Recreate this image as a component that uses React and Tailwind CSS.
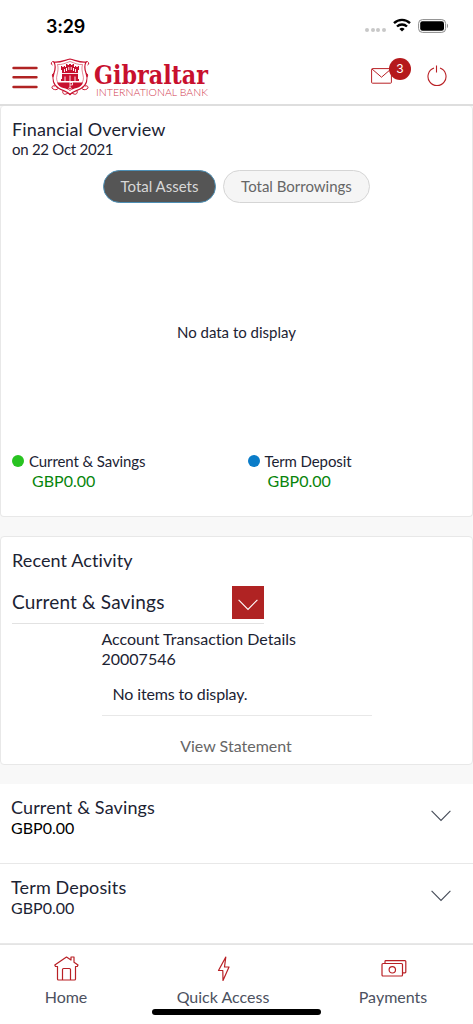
import clsx from 'clsx';

const accounts = [
  { name: 'Current & Savings', balance: 'GBP0.00', tone: 'text-black' },
  { name: 'Term Deposits', balance: 'GBP0.00', tone: 'text-[#1c2333]' },
];

export default function App() {
  return (
    <div className="w-[473px] h-[1024px] overflow-hidden flex flex-col bg-[#f8f8f8] font-['Lato',sans-serif] text-[#1c2333] [font-variant-ligatures:none]">
      <header className="h-[106px] shrink-0 bg-white border-b-2 border-[#dedede]">
        <StatusBar />
        <TopBar />
      </header>
      <FinancialOverview />
      <RecentActivity />
      <div className="mt-[19px] shrink-0 bg-white">
        {accounts.map((a) => (
          <AccountRow key={a.name} {...a} />
        ))}
      </div>
      <BottomNav />
    </div>
  );
}

function StatusBar() {
  return (
    <div className="h-[50px] pl-[46px] pr-[24px] flex items-center justify-between">
      <span className="mt-[3px] font-['Inter',sans-serif] font-semibold text-[18px] leading-6 tracking-[-0.2px] text-black">3:29</span>
      <div className="flex items-center">
        <div className="flex gap-[1.6px] mt-[10px] mr-[7px]">
          {[0, 1, 2, 3].map((i) => (
            <span key={i} className="size-[4px] rounded-full bg-[#c8c8c8]" />
          ))}
        </div>
        <svg width="18" height="14" viewBox="0 0 18 14" className="mr-[7px]" fill="none" stroke="#000" strokeWidth="2.4">
          <path d="M1 5.1a11.6 11.6 0 0 1 16 0" />
          <path d="M4 8.5a7.3 7.3 0 0 1 10 0" />
          <path d="M9 13.6 6.4 11a3.8 3.8 0 0 1 5.2 0z" fill="#000" stroke="none" />
        </svg>
        <svg width="31" height="14" viewBox="0 0 31 14" className="mt-[2px]">
          <rect x="0.6" y="0.6" width="27" height="12.8" rx="3.8" fill="none" stroke="#8a8a8a" strokeWidth="1" />
          <rect x="2.2" y="2.2" width="23.8" height="9.6" rx="2.3" fill="#000" />
          <path d="M29 4.8v4.4c1.3-.5 1.3-3.9 0-4.4z" fill="#888" />
        </svg>
      </div>
    </div>
  );
}

function TopBar() {
  return (
    <div className="h-[54px] pl-[12px] pr-[26px] flex items-center">
      <svg width="26" height="24" viewBox="0 0 26 24" stroke="#b02323" strokeWidth="2.4" strokeLinecap="round">
        <path d="M1.500 3H24.500M1.500 12.200H24.500M1.500 22H24.500" />
      </svg>
      <Crest />
      <svg width="118" height="40" viewBox="0 0 118 40" className="ml-[3px] mt-[2px] overflow-visible">
        <text x="1" y="25.5" textLength="114" lengthAdjust="spacingAndGlyphs" fill="#c8102e" className="font-['DejaVu_Serif_Condensed','DejaVu_Serif',serif] text-[25.5px] font-bold">
          Gibraltar
        </text>
        <text x="3" y="37.5" textLength="112" lengthAdjust="spacingAndGlyphs" fill="#d23a50" className="font-['Lato',sans-serif] text-[10.5px] font-light">
          INTERNATIONAL BANK
        </text>
      </svg>
      <div className="relative ml-auto mr-[35px] w-[21px] h-[16px] -mt-[3px]">
        <svg width="21" height="16" viewBox="0 0 21 16" fill="none" stroke="#b92025" strokeWidth="1">
          <rect x="0.6" y="0.6" width="19.8" height="14.6" rx="0.8" />
          <path d="M1 1l9.5 8.2L20 1" />
        </svg>
        <span className="absolute left-[18px] -top-[10px] size-[22px] rounded-full bg-[#b5191c] text-white text-[12px] leading-[22px] text-center font-['Inter',sans-serif]">
          3
        </span>
      </div>
      <svg width="20" height="22" viewBox="0 0 20 22" className="-mt-[2px]" fill="none" stroke="#b92025" strokeWidth="1.1">
        <path d="M7 3A9 9 0 1 0 13 3M9.500.5v7" />
      </svg>
    </div>
  );
}

function Crest() {
  return (
    <svg width="40" height="39" viewBox="0 0 40 39" className="ml-[12px] mt-px" fill="none" stroke="#c8102e" strokeWidth="1">
      <path d="M4 4C9 5 14 2.500 20 1c6 1.500 11 4 16 3-2 4-1.500 7 0 11 2.500 6 .5 12.500-5 15.500-4 2.500-8 2.500-11 6-3-3.500-7-3.500-11-6C3.500 27.500 1.500 21 4 15 5.500 11 6 8 4 4z" strokeWidth="1.2" />
      <path d="M7.500 6.500C12 7 15.500 5 20 3.500 24.500 5 28 7 32.500 6.500 31.500 10 32 13 33 17 34 21 33 23 32 25" strokeWidth=".5" />
      <path d="M7.500 6.500C8.500 10 8 13 7 17 6 21 7 23 8 25" strokeWidth=".5" />
      <path d="M4 4a1.700 1.700 0 1 0-1.500 3M36 4a1.700 1.700 0 1 1 1.500 3M4 15c-2 1-2 3-1 4M36 15c2 1 2 3 1 4M5 28c-3-1-4 2-2 3s4 1 5-.5M35 28c3-1 4 2 2 3s-4 1-5-.5M13 33c-1 2 1 4 3 3s3-1 4 1M27 33c1 2-1 4-3 3s-3-1-4 1" />
      <path
        d="M16 6h1.500v1h1.500V6h2v1h1.500V6H24v4h-1v3h1v-4h1V8h1.200v1h1.600V8H29v4h-1v9h1v2H11v-2h1v-9h-1V8h1.200v1h1.600V8H15v1h1v4h1v-3h-1z"
        fill="#c8102e"
        stroke="none"
      />
      <path d="M14.500 11v3M25.500 11v3M18.800 9v3M21.200 9v3M15 18.500V23M20 17.500V23M25 18.500V23M12 15.500h16" stroke="#fff" strokeWidth=".9" />
      <path d="M7 24.500h26c-1 3-3 4.500-6.300 5.500-3 1-5.200 1-6.700 3-1.500-2-3.700-2-6.700-3-3.300-1-5.300-2.500-6.300-5.500z" fill="#c8102e" stroke="none" />
      <path d="M20 23.500v6m0-5h2.500v2.500H20" stroke="#fff" strokeWidth=".8" />
      <circle cx="20" cy="30.500" r="1.200" stroke="#fff" strokeWidth=".7" />
    </svg>
  );
}

function FinancialOverview() {
  return (
    <section className="h-[411px] shrink-0 bg-white border border-t-0 border-[#e8e8e8] rounded-[4px] px-[11px] pt-[12px] flex flex-col">
      <h2 className="text-[18px] leading-[22px] tracking-[0.15px]">Financial Overview</h2>
      <p className="text-[15px] leading-5 tracking-[-0.27px] -mt-px">on 22 Oct 2021</p>
      <div className="mt-[11px] flex justify-center gap-[7px]">
        <Pill active className="w-[113px]">Total Assets</Pill>
        <Pill className="w-[147px]">Total Borrowings</Pill>
      </div>
      <div className="h-[249px] flex items-center justify-center text-[15px] pt-[9px]">
        <span>No data to display</span>
      </div>
      <div className="grid grid-cols-[235.5px_1fr]">
        <Legend dot="bg-[#28c321]" label="Current & Savings" />
        <Legend dot="bg-[#0a7cc8]" label="Term Deposit" />
      </div>
    </section>
  );
}

function Pill({ active, className, children }) {
  return (
    <button
      className={clsx(
        'h-[33px] rounded-full border text-[15px] text-center',
        active ? 'bg-[#555] border-[#4d8fb5] text-[#d8d8d8]' : 'bg-[#f5f5f5] border-[#d5d5d5] text-[#666]',
        className
      )}
    >
      {children}
    </button>
  );
}

function Legend({ dot, label }) {
  return (
    <div className="leading-[19px]">
      <div className="flex items-center text-[15px] tracking-[-0.1px]">
        <span className={clsx('size-[12px] rounded-full mr-[5px] -mt-px', dot)} />
        {label}
      </div>
      <div className="pl-[20px] text-[16px] text-[#07850b]">GBP0.00</div>
    </div>
  );
}

function RecentActivity() {
  return (
    <section className="mt-[19px] h-[229px] shrink-0 bg-white border border-[#e8e8e8] rounded-[4px] pl-[11px] pt-[12px]">
      <h2 className="text-[18px] leading-[22px] tracking-[0.1px]">Recent Activity</h2>
      <div className="mt-[13px] w-[252px] h-[40px] flex justify-between border-b border-[#e2e2e2]">
        <span className="text-[19px] leading-[36px] tracking-[0.17px]">Current & Savings</span>
        <button className="w-[32px] h-[33px] mt-[2px] bg-[#b02323] flex items-center justify-center">
          <Chevron className="text-white mt-[4px]" />
        </button>
      </div>
      <div className="ml-[89.5px] w-[270px] h-[92px] pt-[5px] border-b border-[#e8e8e8] text-[16px] leading-[19.5px]">
        <p className="tracking-[-0.02px]">Account Transaction Details</p>
        <p>20007546</p>
        <p className="mt-[16px] pl-[11px] tracking-[-0.15px]">No items to display.</p>
      </div>
      <div className="mt-[19px] pr-[12px] text-center text-[16px] leading-[22px] text-[#666]">View Statement</div>
    </section>
  );
}

function Chevron({ className }) {
  return (
    <svg width="20" height="12" viewBox="0 0 20 12" fill="none" stroke="currentColor" strokeWidth="1.1" className={className}>
      <path d="M.6.8 10 10.500 19.400.8" />
    </svg>
  );
}

function AccountRow({ name, balance, tone }) {
  return (
    <div className="h-[80px] pl-[11px] pr-[22px] pt-[12px] flex justify-between border-b border-[#e8e8e8]">
      <div>
        <div className="text-[18px] leading-[22px] tracking-[0.13px]">{name}</div>
        <div className={clsx('text-[16px] leading-[20px]', tone)}>{balance}</div>
      </div>
      <Chevron className="mt-[14px] text-[#454b58]" />
    </div>
  );
}

function BottomNav() {
  return (
    <nav className="relative grow bg-white border-t border-[#e4e4e4] text-[#4c5160] text-[16px] leading-5 flex">
      <NavItem label="Home" className="w-[132px]">
        <path d="M1.500 10.500.8 9 12.500 1l4.500 3V1h3v5.200l4 2.800-.7 1.500H21.500V23a1 1 0 0 1-1 1h-16a1 1 0 0 1-1-1V10.500zM8.500 24V13.500a1 1 0 0 1 1-1h6a1 1 0 0 1 1 1V24" />
      </NavItem>
      <NavItem label="Quick Access" className="w-[182px]">
        <path d="M14.800 1 7.500 14.500h4.300L12 24.500 18 11h-4.500z" />
      </NavItem>
      <NavItem label="Payments" className="w-[158px]">
        <rect x="1" y="7.500" width="20.500" height="12.500" rx="1" />
        <path d="M4 7.500V5.500a.8.800 0 0 1 .8-.8H24a.8.800 0 0 1 .8.800V16a.8.800 0 0 1-.8.800h-2.500" />
        <circle cx="11.300" cy="13.800" r="3.200" />
      </NavItem>
      <span className="absolute left-[152px] bottom-[9px] w-[169px] h-[6px] rounded-full bg-black" />
    </nav>
  );
}

function NavItem({ label, className, children }) {
  return (
    <div className={clsx('pt-[11px] flex flex-col items-center', className)}>
      <svg width="26" height="26" viewBox="0 0 26 26" className="ml-px" fill="none" stroke="#b92025" strokeWidth="1.200" strokeLinejoin="round">
        {children}
      </svg>
      <span className="mt-[5px]">{label}</span>
    </div>
  );
}
